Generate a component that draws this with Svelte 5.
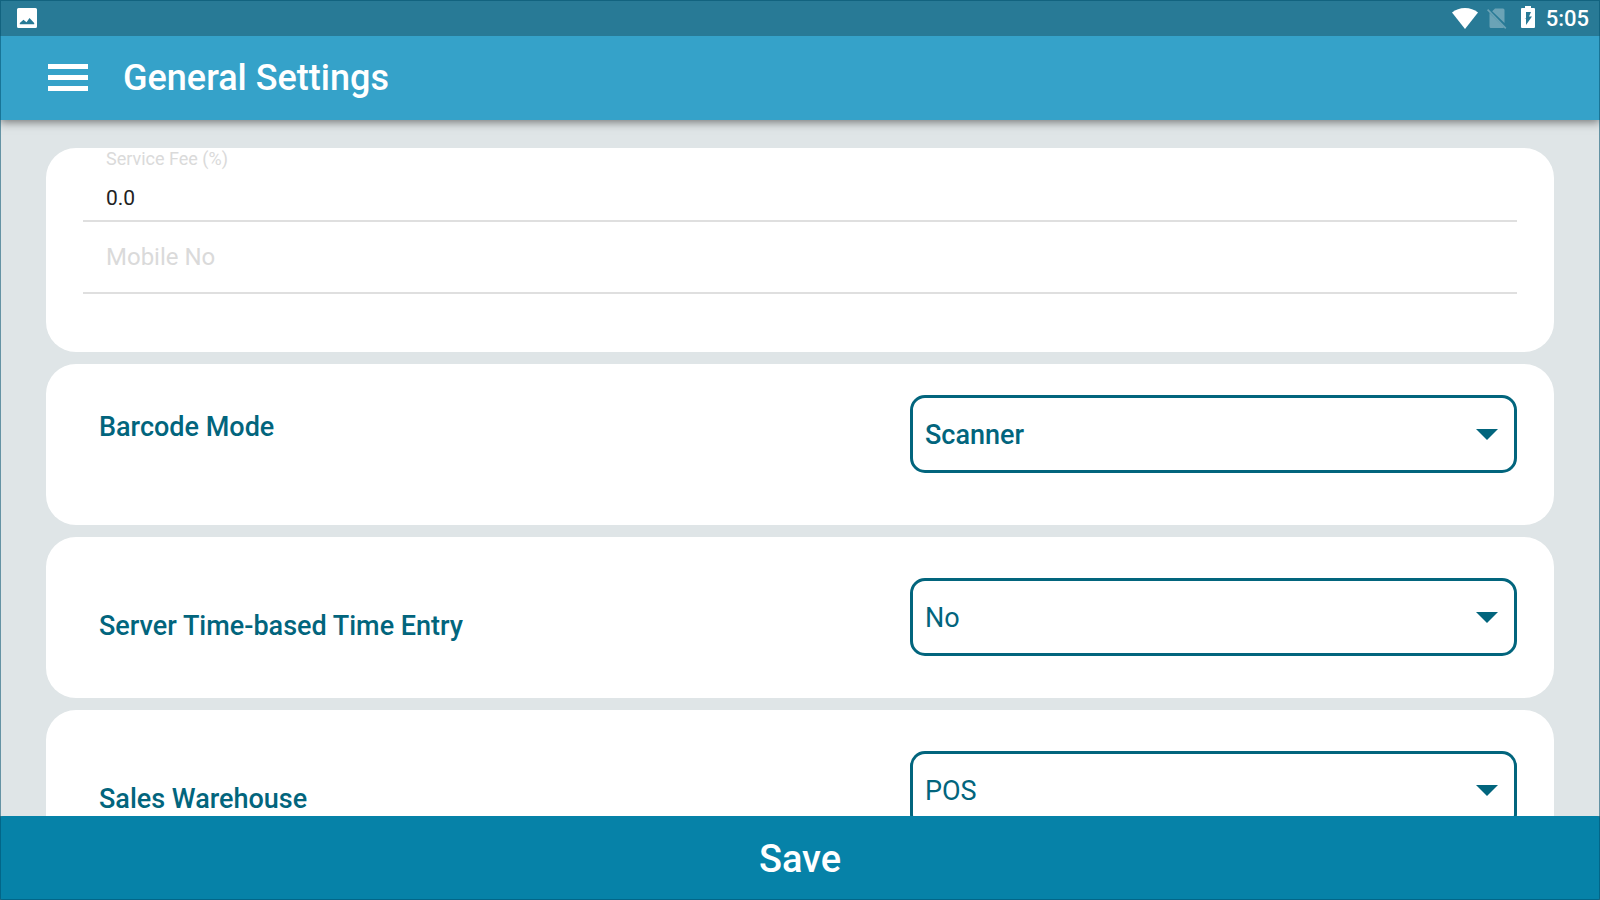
<script>
  let serviceFee = $state('0.0');
  let mobileNo = $state('');
  let settings = $state([
    { id: 'barcode', label: 'Barcode Mode', value: 'Scanner', options: ['Scanner', 'Camera'], strong: true },
    { id: 'server-time', label: 'Server Time-based Time Entry', value: 'No', options: ['No', 'Yes'], strong: false },
    { id: 'warehouse', label: 'Sales Warehouse', value: 'POS', options: ['POS'], strong: false }
  ]);
</script>

<div class="screen">
  <div class="status">
    <svg class="picture" viewBox="0 0 20 20" aria-hidden="true">
      <path fill="#fff" fill-rule="evenodd" d="M1.500 0h17a1.500 1.500 0 0 1 1.500 1.500v17a1.500 1.500 0 0 1-1.500 1.500h-17A1.500 1.500 0 0 1 0 18.500v-17A1.500 1.500 0 0 1 1.500 0zM2.800 16.300h14.400v-1.300L12.500 10 9.500 14.200 6.500 11.800 2.800 15z" />
    </svg>
    <div class="tray">
      <svg width="26" height="21" viewBox="0 0 26 21" aria-hidden="true">
        <path fill="#fff" d="M13 21 0 4.500Q5.500 0 13 0t13 4.500z" />
      </svg>
      <svg class="sim" width="20" height="21" viewBox="0 0 20 21" aria-hidden="true">
        <path fill="#6ba3b6" d="M8 .5h8A1.500 1.500 0 0 1 17.500 2v13L5.200 3.300zM2.500 5 17 19.300q-.4.700-1 .7H4a1.500 1.500 0 0 1-1.500-1.500z" />
        <path stroke="#6ba3b6" stroke-width="1.600" d="M.6 1.600 18.800 20.400" />
      </svg>
      <svg class="battery" width="14" height="22" viewBox="0 0 14 22" aria-hidden="true">
        <path fill="#fff" fill-rule="evenodd" d="M4 0h6v2h3a1 1 0 0 1 1 1v18a1 1 0 0 1-1 1H1a1 1 0 0 1-1-1V3a1 1 0 0 1 1-1h3zM5 6v6.500H3.500L5 13v6l6-8.500H8L10 6z" />
      </svg>
      <span class="clock">5:05</span>
    </div>
  </div>

  <header>
    <button class="menu" aria-label="Open menu"><i></i><i></i><i></i></button>
    <h1>General Settings</h1>
  </header>

  <main>
    <section class="card fields">
      <div class="field">
        <label for="fee">Service Fee (%)</label>
        <input id="fee" bind:value={serviceFee} />
      </div>
      <div class="field">
        <input id="mobile" class="empty" placeholder="Mobile No" aria-label="Mobile No" bind:value={mobileNo} />
      </div>
    </section>

    {#each settings as item (item.id)}
      <section class="card choice" class:strong={item.strong}>
        <label for={item.id}>{item.label}</label>
        <div class="picker">
          <select id={item.id} bind:value={item.value}>
            {#each item.options as option}
              <option>{option}</option>
            {/each}
          </select>
          <svg class="arrow" width="22" height="11" viewBox="0 0 22 11" aria-hidden="true"><path fill="#02657d" d="M0 0h22L11 11z" /></svg>
        </div>
      </section>
    {/each}
  </main>

  <footer><button class="save">Save</button></footer>
</div>

<style>
  :global(body) { margin: 0; }
  .screen {
    height: 100vh;
    display: flex;
    flex-direction: column;
    overflow: hidden;
    background: #dfe5e7;
    font-family: Roboto, sans-serif;
    color: #02657d;
  }
  .screen::after {
    content: '';
    position: fixed;
    inset: 0;
    border: 1px solid rgba(0, 80, 110, 0.55);
    pointer-events: none;
    z-index: 3;
  }
  .screen * { box-sizing: border-box; }
  svg { display: block; }
  .status {
    flex: none;
    height: 36px;
    padding: 0 12px 0 17px;
    display: flex;
    align-items: center;
    justify-content: space-between;
    background: #287a96;
    position: relative;
    z-index: 2;
  }
  .picture { width: 20px; height: 20px; }
  .tray { display: flex; align-items: center; }
  .sim { margin-left: 9px; }
  .battery { margin: 0 0 2px 14px; }
  .clock {
    margin-left: 11px;
    padding-top: 2px;
    font-size: 22px;
    line-height: 34px;
    font-weight: 500;
    color: #fff;
  }
  .tray { margin-right: -1px; }
  header {
    flex: none;
    height: 84px;
    padding-left: 48px;
    display: flex;
    align-items: center;
    gap: 35px;
    background: #35a2c9;
    box-shadow: 0 2px 9px rgba(0, 0, 0, 0.5);
    z-index: 1;
  }
  button { border: 0; padding: 0; font: inherit; color: #fff; cursor: pointer; }
  .menu {
    width: 40px;
    padding-bottom: 1px;
    display: flex;
    flex-direction: column;
    gap: 6px;
    background: none;
  }
  .menu i { height: 5px; background: #fff; }
  h1 { margin: 0; font-size: 36px; line-height: 42px; font-weight: 500; color: #fff; }
  main {
    flex: 1;
    min-height: 0;
    overflow: hidden;
    padding: 28px 46px 0;
    display: flex;
    flex-direction: column;
    gap: 12px;
  }
  .card {
    flex: none;
    border-radius: 30px;
    padding: 0 37px;
    background: #fff;
  }
  .fields { height: 204px; }
  .field {
    height: 72px;
    display: flex;
    flex-direction: column;
    border-bottom: 2px solid #dfdfdf;
  }
  .field:first-child { height: 74px; }
  .field label {
    padding-left: 23px;
    font-size: 18px;
    line-height: 22px;
    color: #dadada;
  }
  .field input {
    flex: 1;
    min-height: 0;
    width: 100%;
    border: 0;
    outline: 0;
    padding: 6px 23px 0;
    background: none;
    font: 21px Roboto, sans-serif;
    color: #222;
  }
  .field .empty { padding-top: 0; font-size: 24px; }
  .field input::placeholder { color: #dadada; opacity: 1; }
  .choice {
    min-height: 161px;
    display: grid;
    grid-template-columns: 827fr 607fr;
    align-items: start;
    padding-top: 41px;
  }
  .choice label {
    padding: 32px 16px 0;
    font-size: 27px;
    line-height: 32px;
    font-weight: 500;
  }
  .strong { padding-top: 31px; }
  .strong label { padding-top: 16px; }
  .picker { display: grid; align-items: center; }
  .picker > * { grid-area: 1 / 1; }
  select {
    appearance: none;
    width: 100%;
    height: 78px;
    padding: 2px 56px 0 12px;
    border: 3px solid #02657d;
    border-radius: 15px;
    background: #fff;
    font: 27px Roboto, sans-serif;
    color: #02657d;
  }
  .strong select { font-weight: 500; }
  .arrow { justify-self: end; margin-right: 19px; pointer-events: none; }
  footer { flex: none; display: flex; background: #52808f; z-index: 1; }
  .save {
    flex: 1;
    height: 84px;
    padding-top: 2px;
    border-radius: 3px;
    background: #0682a8;
    font-size: 38px;
    line-height: 42px;
    font-weight: 500;
  }
</style>
